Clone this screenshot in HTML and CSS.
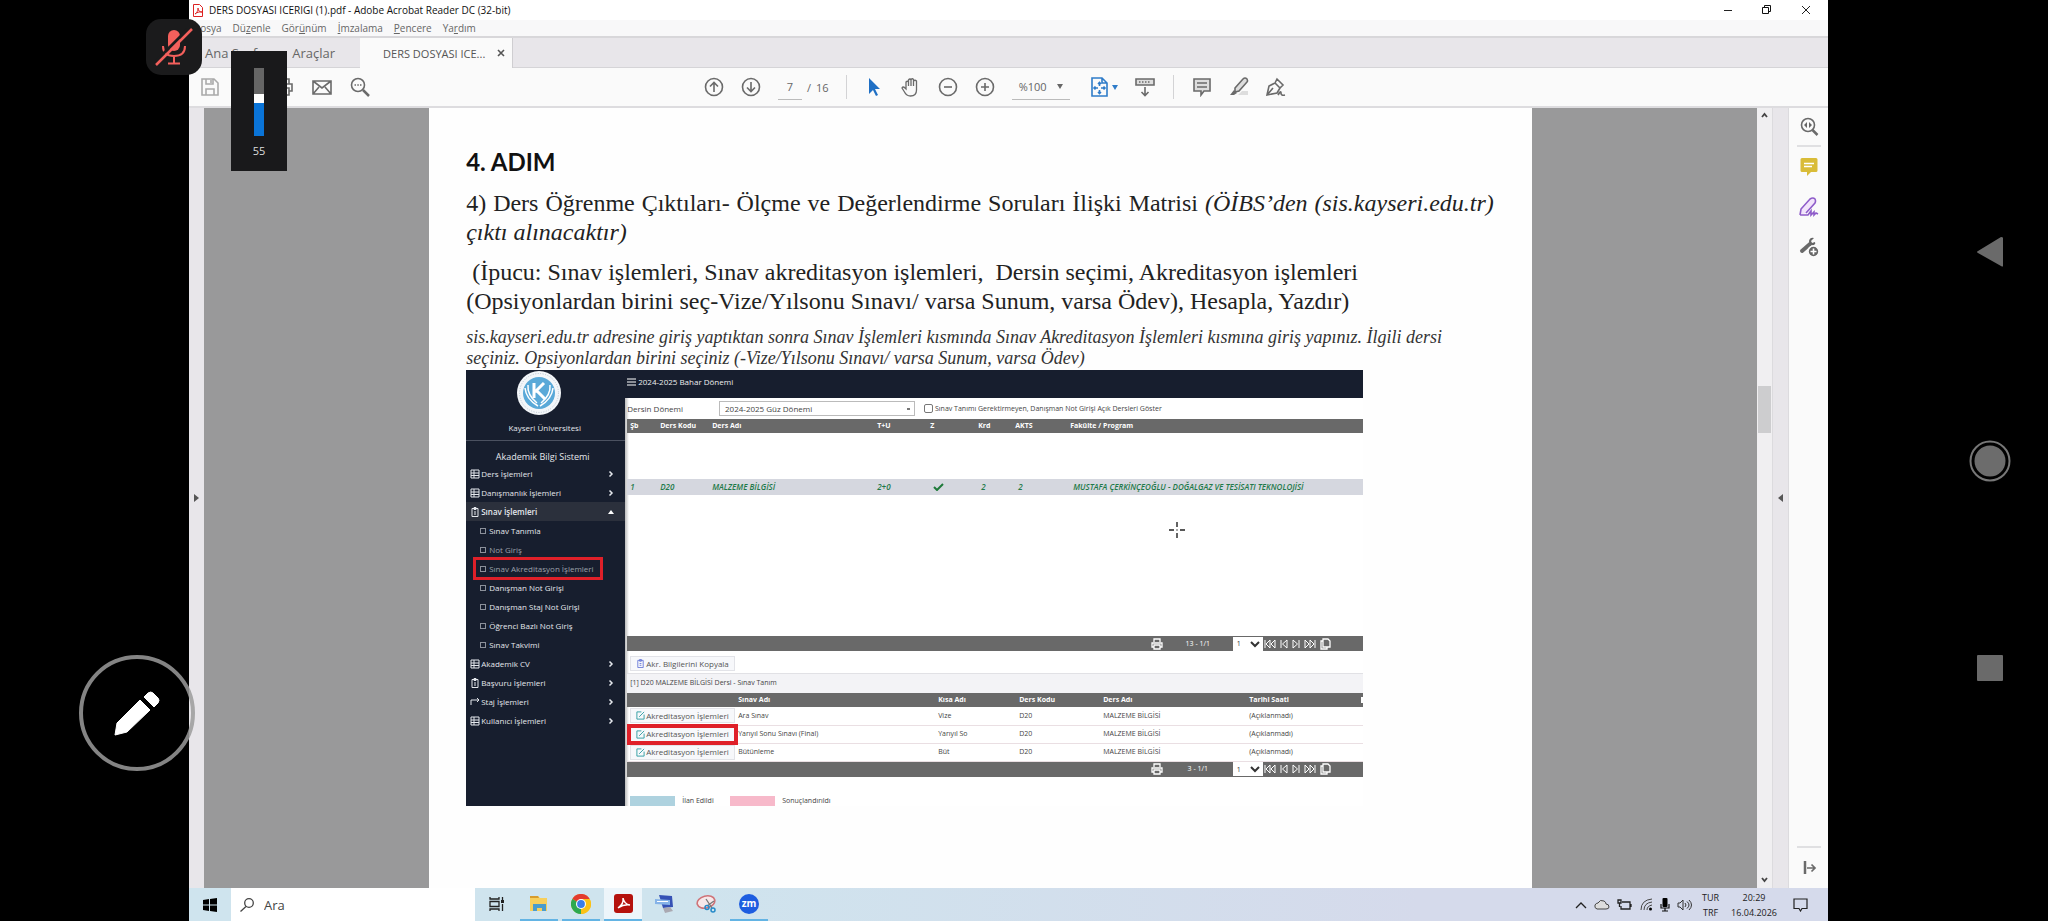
FILE: index.html
```html
<!DOCTYPE html>
<html lang="tr">
<head>
<meta charset="utf-8">
<title>DERS DOSYASI ICERIGI (1).pdf - Adobe Acrobat Reader DC (32-bit)</title>
<link rel="stylesheet" href="styles.css">
</head>
<body>
<svg class="defs" aria-hidden="true">
  <symbol id="box" viewBox="0 0 10 10"><path d="M1 1h8v8H1zM1 4h8M1 6.500h8M4 1v8" fill="none" stroke="currentColor"/></symbol>
  <symbol id="doc" viewBox="0 0 10 10"><path d="M2 1.500h6v8H2zM4 .5h2v2H4zM4 5h2M4 7h2" fill="none" stroke="currentColor"/></symbol>
  <symbol id="edit" viewBox="0 0 10 10"><path d="M6 1H1v8h8V4M3.500 6.500L9 1" fill="none" stroke="currentColor"/></symbol>
  <symbol id="printer" viewBox="0 0 12 12"><path d="M3 4V1h6v3M3 9H1V5h10v4H9M3 7h6v4H3z" fill="none" stroke="currentColor" stroke-width="1.300"/></symbol>
  <symbol id="first" viewBox="0 0 12 10"><path d="M1 1v8M6 1v8L2 5zM11 1v8L7 5z" fill="none" stroke="currentColor"/></symbol>
  <symbol id="prev" viewBox="0 0 8 10"><path d="M1 1v8M7 1v8L2.500 5z" fill="none" stroke="currentColor"/></symbol>
  <symbol id="next" viewBox="0 0 8 10"><path d="M7 1v8M1 1v8L5.500 5z" fill="none" stroke="currentColor"/></symbol>
  <symbol id="last" viewBox="0 0 12 10"><path d="M11 1v8M1 1v8L5 5zM6 1v8l4-4z" fill="none" stroke="currentColor"/></symbol>
  <symbol id="copy" viewBox="0 0 11 12"><path d="M3 1h5l2 2v6H3zM3 3H1v8h6V9" fill="none" stroke="currentColor" stroke-width="1.300"/></symbol>
  <symbol id="chev" viewBox="0 0 6 8"><path d="M1.500 1.500L4 4 1.500 6.500" fill="none" stroke="currentColor" stroke-width="1.500"/></symbol>
</svg>

<aside class="gutter gutter-left">
  <button class="pen-button" aria-label="Kalem">
    <svg viewBox="0 0 46 46" width="46" height="46"><path d="M1 45l2-12L26 10l10 10-23 22z" fill="#fff" stroke="#fff" stroke-linejoin="round"/><path d="M30 7l4-4q3-2 5 0l5 5q2 2 0 5l-4 4z" fill="#fff" stroke="#fff" stroke-linejoin="round"/></svg>
  </button>
</aside>

<main class="screen">
  <header class="titlebar">
    <svg width="10" height="13" viewBox="0 0 10 13"><path d="M.5.5h6l3 3v9h-9z" fill="#fff" stroke="#d22"/><path d="M2 10c3-2 3-5 3-6 0 3 2 4 4 4-3-.5-5 .5-7 2z" fill="none" stroke="#d22"/></svg>
    <h1 class="window-title">DERS DOSYASI ICERIGI (1).pdf - Adobe Acrobat Reader DC (32-bit)</h1>
    <div class="window-controls">
      <button aria-label="Simge durumuna küçült"><svg width="10" height="10"><path d="M1 5.500h8" stroke="#222" fill="none"/></svg></button>
      <button aria-label="Önceki boyut"><svg width="10" height="10"><path d="M.5 2.500h6v6h-6zM2.500 2.500v-2h6v6h-2" stroke="#111" fill="none"/></svg></button>
      <button aria-label="Kapat"><svg width="10" height="10"><path d="M1 1l8 8M9 1l-8 8" stroke="#222" fill="none"/></svg></button>
    </div>
  </header>
  <nav class="menubar">
    <a href="#">Dosya</a><a href="#">Dü<u>z</u>enle</a><a href="#">Gör<u>ü</u>nüm</a><a href="#"><u>İ</u>mzalama</a><a href="#"><u>P</u>encere</a><a href="#">Ya<u>r</u>dım</a>
  </nav>
  <nav class="tabs">
    <a class="tab tab-home" href="#">Ana Sayfa</a>
    <a class="tab tab-tools" href="#">Araçlar</a>
    <div class="tab tab-active"><span>DERS DOSYASI ICE...</span><button aria-label="Sekmeyi kapat"><svg width="8" height="8"><path d="M1 1l6 6M7 1L1 7" stroke="#555" stroke-width="1.600"/></svg></button></div>
  </nav>
  <div class="toolbar">
    <div class="tools tools-file">
      <button aria-label="Kaydet" class="faded"><svg width="20" height="20" viewBox="0 0 20 20"><path d="M2 2h12l4 4v12H2zM6 2v5h7V2M6 18v-6h8v6M11 3v3"/></svg></button>
      <button aria-label="Yazdır"><svg width="20" height="20" viewBox="0 0 20 20"><path d="M5 7V2h10v5M5 14H2V7h16v7h-3M5 11h10v7H5z"/></svg></button>
      <button aria-label="E-posta"><svg width="20" height="20" viewBox="0 0 20 20"><path d="M1 4h18v13H1zM1 4l9 7 9-7M1 17l6-7M19 17l-6-7"/></svg></button>
      <button aria-label="Bul"><svg width="20" height="20" viewBox="0 0 20 20"><circle cx="8" cy="8" r="6.500"/><path d="M13 13l6 6" stroke-width="2.500"/><path d="M4.500 8h1.500M7.300 8h1.500M10 8h1.500" /></svg></button>
    </div>
    <div class="tools tools-main">
      <button aria-label="Önceki sayfa"><svg width="20" height="20" viewBox="0 0 20 20"><circle cx="10" cy="10" r="8.500"/><path d="M10 15V5.500M6 9.500l4-4 4 4"/></svg></button>
      <button aria-label="Sonraki sayfa"><svg width="20" height="20" viewBox="0 0 20 20"><circle cx="10" cy="10" r="8.500"/><path d="M10 5v9.500M6 10.500l4 4 4-4"/></svg></button>
      <label class="page-field"><input value="7" aria-label="Sayfa"><span>/</span><span>16</span></label>
      <i class="sep"></i>
      <button aria-label="Seç"><svg width="20" height="20" viewBox="0 0 20 20"><path d="M5 1v16l4-4 3 6 2-1-3-6h5z" fill="#1f6fc4" stroke="none"/></svg></button>
      <button aria-label="El"><svg width="20" height="20" viewBox="0 0 20 20"><path d="M5 12V5q1.500-1.500 2.500 0v4V3Q9 1 10 3v6V2.500q1.500-1.500 2.500 0V9V4q1.500-1.500 3 0v9q0 6-6 6-4 0-6-4l-2.500-4q1-2 3 0z" stroke-width="1.300"/></svg></button>
      <button aria-label="Uzaklaştır"><svg width="20" height="20" viewBox="0 0 20 20"><circle cx="10" cy="10" r="8.500"/><path d="M6 10h8"/></svg></button>
      <button aria-label="Yakınlaştır"><svg width="20" height="20" viewBox="0 0 20 20"><circle cx="10" cy="10" r="8.500"/><path d="M6 10h8M10 6v8"/></svg></button>
      <button class="zoom-field"><span>%100</span><i class="caret"></i></button>
      <button class="fit blue" aria-label="Sayfayı sığdır"><svg width="17" height="20" viewBox="0 0 17 20"><path d="M1 1h10l5 5v13H1zM11 1v5h5M8.500 5v4M8.500 13v4M3 11h4M10 11h4M7 7l1.500-1.500L10 7M7 15l1.500 1.500L10 15M4.500 9.500L3 11l1.500 1.500M12.500 9.500L14 11l-1.500 1.500"/></svg><i class="caret"></i></button>
      <button aria-label="Kaydırma"><svg width="20" height="20" viewBox="0 0 20 20"><path d="M1 2h18v6H1z" fill="#ddd"/><path d="M4 5h12" stroke-dasharray="1.500 1.500"/><path d="M10 10v8.500M6.500 15l3.500 3.500 3.500-3.500"/></svg></button>
      <i class="sep sep-wide"></i>
      <button aria-label="Yorum"><svg width="20" height="20" viewBox="0 0 20 20"><path d="M2 2h16v12h-6l-3 4v-4H2z" fill="#ddd"/><path d="M5 6h10M5 10h10"/></svg></button>
      <button aria-label="Vurgula"><svg width="20" height="20" viewBox="0 0 20 20"><path d="M9 18h10v-4h-6z" fill="#ddd" stroke="none"/><path d="M6 11L14 2q2-2 4 0 1 2 0 3l-8 9-4 1z" fill="#ddd"/><path d="M1 18l4-5 3 3-3 2z" fill="#6a6a6a" stroke="none"/></svg></button>
      <button aria-label="İmzala"><svg width="20" height="20" viewBox="0 0 20 20"><path d="M1 18l2-9 6-3 5 5-3 5zM1 18l6-7M9 6l2-4 6 6-3 3M12 18q3-5 3-2t4 2"/></svg></button>
    </div>
  </div>

  <section class="workspace">
    <button class="rail" aria-label="Gezinti bölmesi"><svg width="5" height="8"><path d="M0 0l5 4-5 4z" fill="#555"/></svg></button>
    <div class="canvas">
      <article class="page">
        <h2>4. ADIM</h2>
        <p class="lead justified">4) Ders Öğrenme Çıktıları- Ölçme ve Değerlendirme Soruları İlişki Matrisi <em>(ÖİBS’den (sis.kayseri.edu.tr) çıktı alınacaktır)</em></p>
        <p class="lead">&nbsp;(İpucu: Sınav işlemleri, Sınav akreditasyon işlemleri,&nbsp; Dersin seçimi, Akreditasyon işlemleri<br>(Opsiyonlardan birini seç-Vize/Yılsonu Sınavı/ varsa Sunum, varsa Ödev), Hesapla, Yazdır)</p>
        <p class="note">sis.kayseri.edu.tr adresine giriş yaptıktan sonra Sınav İşlemleri kısmında Sınav Akreditasyon İşlemleri kısmına giriş yapınız. İlgili dersi<br>seçiniz. Opsiyonlardan birini seçiniz (-Vize/Yılsonu Sınavı/ varsa Sunum, varsa Ödev)</p>

        <div class="portal">
          <nav class="side">
            <svg class="crest" width="44" height="44" viewBox="0 0 44 44"><circle cx="22" cy="22" r="22" fill="#f3f6f9"/><circle cx="22" cy="22" r="19.500" fill="none" stroke="#b9c6d2" stroke-dasharray="1 1.500"/><circle cx="22" cy="22" r="16" fill="#5aa9d8"/><path d="M17 12v15M18 21l9-9M19 19l9 9" stroke="#fff" stroke-width="3" fill="none"/><path d="M8 17q1 11 13 18M36 17q-1 11-13 18M11 14q-1 10 9 18M33 14q1 10-9 18" fill="none" stroke="#fff" stroke-width="1.500"/></svg>
            <div class="uni">Kayseri Üniversitesi</div>
            <div class="system">Akademik Bilgi Sistemi</div>
            <a href="#"><svg><use href="#box"/></svg>Ders İşlemleri<svg class="chev"><use href="#chev"/></svg></a>
            <a href="#"><svg><use href="#box"/></svg>Danışmanlık İşlemleri<svg class="chev"><use href="#chev"/></svg></a>
            <a href="#" class="open"><svg><use href="#doc"/></svg>Sınav İşlemleri<svg class="chev" viewBox="0 0 6 8"><path d="M0 6l3-4 3 4z" fill="#fff"/></svg></a>
            <a href="#" class="sub"><i></i>Sınav Tanımla</a>
            <a href="#" class="sub dim"><i></i>Not Giriş</a>
            <a href="#" class="sub dim marked"><i></i>Sınav Akreditasyon İşlemleri</a>
            <a href="#" class="sub"><i></i>Danışman Not Girişi</a>
            <a href="#" class="sub"><i></i>Danışman Staj Not Girişi</a>
            <a href="#" class="sub"><i></i>Öğrenci Bazlı Not Giriş</a>
            <a href="#" class="sub"><i></i>Sınav Takvimi</a>
            <a href="#"><svg><use href="#box"/></svg>Akademik CV<svg class="chev"><use href="#chev"/></svg></a>
            <a href="#"><svg><use href="#doc"/></svg>Başvuru İşlemleri<svg class="chev"><use href="#chev"/></svg></a>
            <a href="#"><svg viewBox="0 0 10 10"><path d="M1 8V3h8M7 1l2 2-2 2" fill="none" stroke="currentColor"/></svg>Staj İşlemleri<svg class="chev"><use href="#chev"/></svg></a>
            <a href="#"><svg><use href="#box"/></svg>Kullanıcı İşlemleri<svg class="chev"><use href="#chev"/></svg></a>
          </nav>
          <div class="portal-main">
            <div class="portal-head"><svg width="9" height="8"><path d="M0 1h9M0 4h9M0 7h9" stroke="#fff"/></svg>2024-2025 Bahar Dönemi</div>
            <div class="filter">
              <label for="term">Dersin Dönemi</label>
              <select id="term"><option>2024-2025 Güz Dönemi</option></select>
              <label class="check"><input type="checkbox">Sınav Tanımı Gerektirmeyen, Danışman Not Girişi Açık Dersleri Göster</label>
            </div>
            <table class="courses">
              <colgroup><col class="c1"><col class="c2"><col class="c3"><col class="c4"><col class="c5"><col class="c6"><col class="c7"><col></colgroup>
              <thead><tr><th>Şb</th><th>Ders Kodu</th><th>Ders Adı</th><th>T+U</th><th>Z</th><th>Krd</th><th>AKTS</th><th>Fakülte / Program</th></tr></thead>
              <tbody>
                <tr class="blank"><td colspan="8"></td></tr>
                <tr class="course"><td>1</td><td>D20</td><td>MALZEME BİLGİSİ</td><td>2+0</td><td><svg width="11" height="8"><path d="M1 4l3 3 6-6" fill="none" stroke="#1f7a3a" stroke-width="2"/></svg></td><td>2</td><td>2</td><td>MUSTAFA ÇERKİNÇEOĞLU - DOĞALGAZ VE TESİSATI TEKNOLOJİSİ</td></tr>
              </tbody>
            </table>
            <div class="pager first-pager">
              <svg width="12" height="12"><use href="#printer"/></svg><span>13 - 1/1</span>
              <select aria-label="Sayfa"><option>1</option></select>
              <svg width="12" height="10"><use href="#first"/></svg><svg width="8" height="10"><use href="#prev"/></svg><svg width="8" height="10"><use href="#next"/></svg><svg width="12" height="10"><use href="#last"/></svg><svg width="11" height="12"><use href="#copy"/></svg>
            </div>
            <div class="copy-row"><button class="mini"><svg class="violet"><use href="#doc"/></svg>Akr. Bilgilerini Kopyala</button></div>
            <div class="caption">[1] D20 MALZEME BİLGİSİ Dersi - Sınav Tanım</div>
            <table class="exams">
              <colgroup><col class="e1"><col class="e2"><col class="e3"><col class="e4"><col class="e5"><col></colgroup>
              <thead><tr><th></th><th>Sınav Adı</th><th>Kısa Adı</th><th>Ders Kodu</th><th>Ders Adı</th><th>Tarihi Saati</th></tr></thead>
              <tbody>
                <tr><td><button class="mini"><svg><use href="#edit"/></svg>Akreditasyon İşlemleri</button></td><td>Ara Sınav</td><td>Vize</td><td>D20</td><td>MALZEME BİLGİSİ</td><td>(Açıklanmadı)</td></tr>
                <tr><td><button class="mini marked"><svg><use href="#edit"/></svg>Akreditasyon İşlemleri</button></td><td>Yarıyıl Sonu Sınavı (Final)</td><td>Yarıyıl So</td><td>D20</td><td>MALZEME BİLGİSİ</td><td>(Açıklanmadı)</td></tr>
                <tr><td><button class="mini"><svg><use href="#edit"/></svg>Akreditasyon İşlemleri</button></td><td>Bütünleme</td><td>Büt</td><td>D20</td><td>MALZEME BİLGİSİ</td><td>(Açıklanmadı)</td></tr>
              </tbody>
            </table>
            <div class="pager">
              <svg width="12" height="12"><use href="#printer"/></svg><span>3 - 1/1</span>
              <select aria-label="Sayfa"><option>1</option></select>
              <svg width="12" height="10"><use href="#first"/></svg><svg width="8" height="10"><use href="#prev"/></svg><svg width="8" height="10"><use href="#next"/></svg><svg width="12" height="10"><use href="#last"/></svg><svg width="11" height="12"><use href="#copy"/></svg>
            </div>
            <div class="legend"><i class="announced"></i><span>İlan Edildi</span><i class="finished"></i><span>Sonuçlandırıldı</span></div>
          </div>
          <svg class="crosshair" width="16" height="16"><path d="M0 8h5M11 8h5M8 0v5M8 11v5M7.500 8h1" stroke="#222" stroke-width="1.400"/></svg>
        </div>
      </article>
    </div>
    <div class="scrollbar">
      <svg width="7" height="6"><path d="M1 5l2.500-3L6 5" fill="none" stroke="#444" stroke-width="1.800"/></svg>
      <i class="thumb"></i>
      <svg width="7" height="6"><path d="M1 1l2.500 3L6 1" fill="none" stroke="#444" stroke-width="1.800"/></svg>
    </div>
    <button class="rail rail-right" aria-label="Araç bölmesi"><svg width="5" height="8"><path d="M5 0L0 4l5 4z" fill="#555"/></svg></button>
    <aside class="toolpane">
      <button aria-label="Ara"><svg width="20" height="20" viewBox="0 0 20 20"><circle cx="9" cy="8" r="6.500"/><path d="M13.500 13l5 5" stroke-width="2.500"/><path d="M8 5v6L5 8zM10 5v6l3-3z" fill="#666" stroke="none"/></svg></button>
      <i class="rule"></i>
      <button aria-label="Yorum"><svg width="20" height="20" viewBox="0 0 20 20"><path d="M2 1h15q1.500 0 1.500 1.500v11Q18.500 15 17 15h-5l-4 4v-4H3q-1.500 0-1.500-1.500v-11Q1.500 1 3 1z" fill="#d9bc38" stroke="none"/><path d="M5 6.500h10M5 9.500h8" stroke="#fff"/></svg></button>
      <button aria-label="Doldur ve imzala"><svg width="20" height="20" viewBox="0 0 20 20"><path d="M1 18l1-6L11 2q3-2 5 0 1 2 0 4L7 16M1 18h8l3-4v4l3-3v3l2-2 2 1" fill="#f2e4fb" stroke="#8e5cc9"/></svg></button>
      <button aria-label="Diğer araçlar"><svg width="20" height="20" viewBox="0 0 20 20"><path d="M3 14l8-7" stroke-width="4" stroke-linecap="round"/><path d="M15 1q-4-1-5 3 0 5 5 4 2-1 1-3l-3 1-1-2z" fill="#666" stroke="none"/><circle cx="14.500" cy="14.500" r="5.500" fill="#666" stroke="#fafafa"/><path d="M14.500 11.500v6M11.500 14.500h6" stroke="#fff"/></svg></button>
      <i class="rule rule-bottom"></i>
      <button aria-label="Bölmeyi daralt"><svg width="20" height="20" viewBox="0 0 20 20"><path d="M6 3v13" stroke-width="2.500"/><path d="M8 10h8M12.500 6.500L16 10l-3.500 3.500" stroke-width="1.700"/></svg></button>
    </aside>
  </section>

  <footer class="taskbar">
    <button class="start" aria-label="Başlat"><svg width="14" height="14"><path d="M0 2l6-1v5.500H0zM7 1l7-1v6.500H7zM0 7.500h6V13l-6-1zM7 7.500h7V14l-7-1z"/></svg></button>
    <label class="search"><svg width="14" height="14"><circle cx="9" cy="5" r="4.300" fill="none" stroke="#444" stroke-width="1.300"/><path d="M6 8.500L.5 13.500" stroke="#444" stroke-width="1.300"/></svg><input placeholder="Ara" aria-label="Ara"></label>
    <div class="apps">
      <button aria-label="Görev görünümü"><svg width="16" height="14"><path d="M1 0v2h9V0M1 14v-2h9v2M1 4.500h9v5H1zM13.500 0v3M13.500 7v7" fill="none" stroke="#222" stroke-width="1.300"/><path d="M12 3h3v3h-3z" fill="#222"/></svg></button>
      <button class="running" aria-label="Dosya Gezgini"><svg width="20" height="18"><path d="M1 1h8l2 2h7v13H1z" fill="#f7cf5c"/><path d="M1 1h8l1 2H1z" fill="#d79c2d"/><path d="M4 9h13v7h-4v-3H8v3H4z" fill="#4a9ccd"/></svg></button>
      <button class="running" aria-label="Chrome"><svg width="20" height="20" viewBox="0 0 20 20"><circle cx="10" cy="10" r="10" fill="#fbc116"/><path d="M10 10L1.300 5A10 10 0 0118.700 5z" fill="#e33b2e"/><path d="M10 10L1.300 5A10 10 0 0010 20z" fill="#2da94f"/><path d="M10 5h8.700A10 10 0 0110 20l4-8z" fill="#fbc116"/><circle cx="10" cy="10" r="5" fill="#fff"/><circle cx="10" cy="10" r="3.900" fill="#3b7de8"/></svg></button>
      <button class="running current" aria-label="Acrobat Reader"><svg width="19" height="19"><rect width="19" height="19" rx="3" fill="#b5120d"/><path d="M4 14q6-4 5-10 1 6 7 7-6-1-12 3z" fill="none" stroke="#fff" stroke-width="1.500"/></svg></button>
      <button aria-label="Uzak bağlantı"><svg width="20" height="20"><path d="M4 1l13 1 1 11-10 1z" fill="#3652b5"/><path d="M0 5l15 1v5L0 10z" fill="#86b3e8"/><path d="M2 7.500h11" stroke="#fff"/><path d="M8 14l7-1 3 4-8 2z" fill="#aaa9b2"/></svg></button>
      <button aria-label="Ekran Alıntısı"><svg width="22" height="20"><ellipse cx="10" cy="8" rx="9" ry="6" fill="#f7e8ea" stroke="#cf7378" stroke-width="1.600" transform="rotate(-15 10 8)"/><path d="M10 5l6 9M18 7l-7 5" stroke="#777" stroke-width="1.300"/><circle cx="17" cy="16" r="2" fill="none" stroke="#268ac9" stroke-width="1.500"/><circle cx="11" cy="13.500" r="2" fill="none" stroke="#268ac9" stroke-width="1.500"/></svg></button>
      <button class="running" aria-label="Zoom"><span class="zoom-logo">zm</span></button>
    </div>
    <div class="tray">
      <svg width="12" height="8"><path d="M1 7l5-5 5 5" fill="none" stroke="#222" stroke-width="1.300"/></svg>
      <svg width="16" height="12"><path d="M3 10q-3-1-2-4 1-2 3-2 2-4 6-2 2 1 2 3 3 0 3 3 0 2-3 2z" fill="#ddd" stroke="#444"/></svg>
      <svg width="16" height="12"><path d="M5 3h8v7H4V7M14 5v3M1 1h3v3H1zM2.500 4v4" fill="none" stroke="#222" stroke-width="1.300"/></svg>
      <svg width="13" height="13"><path d="M1 12Q1 2 12 1M4 12q0-7 8-8M7 12q0-4 5-5" fill="none" stroke="#444"/><circle cx="10.500" cy="11" r="1.500"/></svg>
      <svg width="10" height="14"><rect x="2.500" width="5" height="9" rx="1"/><path d="M1 6v4h8V6M5 10v3M2 13h6" fill="none" stroke="#111" stroke-width="1.200"/></svg>
      <svg width="16" height="12"><path d="M1 4h2l3-3v10L3 8H1zM8 4q2 2 0 4M10 2.500q4 3.500 0 7M12 1q5 5 0 10" fill="none" stroke="#333"/></svg>
      <div class="tray-text lang"><span>TUR</span><span>TRF</span></div>
      <div class="tray-text clock"><span>20:29</span><span>16.04.2026</span></div>
      <svg width="15" height="14"><path d="M1 1h13v9.500H9L7.500 13 6 10.500H1z" fill="none" stroke="#222" stroke-width="1.200"/></svg>
    </div>
  </footer>

  <div class="mic-badge"><svg width="38" height="38" viewBox="0 0 38 38" fill="none" stroke="#f4605c" stroke-width="2"><rect x="13" y="2" width="12" height="21" rx="6" fill="#f4605c" stroke="none"/><path d="M8 18q0 10 11 10t11-10M19 28v7M13 35.500h12"/><path d="M0 34L34 0" stroke="#1b1b1c" stroke-width="3"/><path d="M1 37L37 1" stroke-width="2.500"/></svg></div>
  <div class="volume"><div class="track"><i></i></div><span>55</span></div>
</main>

<nav class="gutter gutter-right">
  <button class="nav-back" aria-label="Geri"><svg width="28" height="32"><path d="M27 2v28q0 1-2 0L2 17q-2-1 0-2L25 1q2 0 2 1z" fill="#6a6a6a"/></svg></button>
  <button class="nav-home" aria-label="Ana ekran"><svg width="42" height="42"><circle cx="21" cy="21" r="19.500" fill="none" stroke="#777" stroke-width="2"/><circle cx="21" cy="21" r="15.500" fill="#6c6c6c"/></svg></button>
  <button class="nav-recent" aria-label="Son uygulamalar"><svg width="28" height="28"><rect x="1" y="1" width="26" height="26" rx="1" fill="#6a6a6a"/></svg></button>
</nav>
</body>
</html>
```
FILE: styles.css
```css
* { box-sizing: border-box; }
body { margin: 0; height: 100vh; display: flex; background: #000; font-family: "Open Sans", "Noto Sans", sans-serif; overflow: hidden; }
button { border: 0; padding: 0; background: none; font: inherit; color: inherit; display: flex; align-items: center; justify-content: center; }
a { color: inherit; text-decoration: none; }
input, select { font: inherit; color: inherit; }
svg { display: block; flex: none; }
.defs { position: absolute; width: 0; height: 0; }

.gutter { flex: none; background: #000; position: relative; }
.gutter-left { width: 189px; }
.gutter-right { width: 220px; display: flex; flex-direction: column; align-items: center; padding: 236px 0 0 104px; }
.nav-home { margin-top: 172px; }
.nav-recent { margin-top: 172px; }
.pen-button { position: absolute; z-index: 2; left: 79px; bottom: 150px; width: 116px; height: 116px; border-radius: 50%; border: 4px solid rgba(155, 155, 155, .85); }

.screen { flex: 1; min-width: 0; display: flex; flex-direction: column; position: relative; background: #fff; }
.titlebar { height: 20px; flex: none; display: flex; align-items: center; gap: 6px; padding-left: 4px; background: #fff; }
.window-title { margin: 0; font: 10px/20px "Open Sans", sans-serif; color: #111; white-space: nowrap; }
.window-controls { margin-left: auto; display: flex; gap: 29px; padding-right: 17px; }
.menubar { height: 16px; flex: none; display: flex; gap: 11px; padding-left: 4px; background: #f8f8f9; font-size: 10px; line-height: 16px; color: #666; }
.tabs { height: 32px; flex: none; display: flex; background: #e8e6ea; border-top: 2px solid #d8d7da; border-bottom: 1px solid #d5d4d7; font-size: 13px; color: #666; }
.tab { display: flex; align-items: center; }
.tab-home { padding: 0 28px 0 16px; }
.tab-tools { padding-right: 25px; }
.tab-active { width: 153px; margin-bottom: -1px; padding-left: 23px; justify-content: space-between; padding-right: 7px; background: #fafafa; border-right: 1px solid #cfced1; font-size: 11px; color: #555; }
.toolbar { height: 40px; flex: none; display: flex; align-items: center; background: #fafafa; border-bottom: 2px solid #dddcdf; color: #666; font-size: 11px; }
.toolbar svg, .toolpane svg { fill: none; stroke: #6a6a6a; stroke-width: 1.6; }
.tools { display: flex; align-items: center; }
.tools-file { padding-left: 11px; gap: 18px; width: 515px; }
.tools-file .faded { opacity: .55; margin-right: 36px; }
.tools-main { gap: 17px; }
.blue svg { stroke: #2f7cc9; }
.page-field { display: flex; align-items: center; gap: 5px; }
.page-field input { width: 24px; height: 26px; border: 0; border-bottom: 1px solid #bbb; padding: 0; text-align: center; background: none; }
.sep { width: 1px; height: 24px; background: #d3d3d5; }
.sep-wide { margin: 0 1px; }
.caret { width: 0; height: 0; border: 3px solid transparent; border-top: 5px solid #666; border-bottom: 0; }
.zoom-field { width: 58px; height: 26px; border-bottom: 1px solid #bbb; justify-content: space-between; padding: 0 7px; }
.fit { gap: 4px; margin-left: 4px; }
.blue .caret { border-top-color: #2f7cc9; }

.workspace { flex: 1; min-height: 0; display: flex; }
.rail { width: 15px; flex: none; background: #e8e6ea; }
.rail-right { width: 17px; border: solid #dcdbde; border-width: 0 1px; }
.canvas { flex: 1; min-width: 0; overflow: hidden; background: #99999a; display: flex; justify-content: center; }
.page { width: 71%; background: #fefefe; padding: 37px 38px 0 37px; color: #222; font-family: "Liberation Serif", serif; }
.page h2 { margin: 0; font: bold 24px/34px Lato, sans-serif; color: #111; }
.page p { margin: 0; white-space: nowrap; }
.page .lead { font-size: 24px; line-height: 29px; margin-top: 11px; }
.page .justified { white-space: normal; text-align: justify; margin-top: 10px; }
.page .note { font-size: 18px; line-height: 21px; font-style: italic; margin-top: 11px; color: #333; }

.portal { height: 436px; margin: 1px 131px 0 0; position: relative; display: grid; grid-template-columns: 159px 1fr; font: 8px/14px "Open Sans", sans-serif; color: #444; }
.side { background: #171e2e; color: #e4e7ec; padding-top: 1px; }
.crest { margin-left: 51px; }
.uni { text-align: center; line-height: 25px; padding-right: 2px; border-bottom: 1px solid #4b5160; }
.system { text-align: center; font-size: 9px; line-height: 15px; padding: 8px 6px 0 0; }
.side a { display: flex; align-items: center; gap: 1px; height: 19px; padding: 0 11px 0 4px; white-space: nowrap; }
.side a svg { width: 10px; height: 10px; }
.side a .chev { width: 6px; height: 8px; margin-left: auto; }
.side .open { background: #2b303c; font-weight: 600; }
.side .sub { padding-left: 14px; gap: 3px; }
.side .sub i { width: 6px; height: 6px; border: 1px solid #8b909a; }
.side .dim { color: #9ba0aa; }
.side .marked { outline: 3px solid #df2029; outline-offset: -1px; margin: 0 24px 0 9px; padding: 0 0 0 5px; height: 19px; }
.portal-main { background: linear-gradient(90deg, #bbb, #fff 4px); min-width: 0; padding-left: 2px; display: flex; flex-direction: column; }
.portal-head { margin-left: -2px; height: 28px; display: flex; gap: 2px; align-items: center; padding: 0 0 4px 2px; background: #171e2e; color: #eee; }
.filter { height: 21px; display: flex; align-items: center; }
.filter select { appearance: none; width: 196px; height: 15px; margin-left: 36px; padding: 0 5px; border: 1px solid #bbb; background: linear-gradient(#777, #777) right 4px center / 3px 2px no-repeat #fff; }
.check { display: flex; align-items: center; gap: 2px; margin-left: 9px; font-size: 7px; }
.check input { appearance: none; width: 9px; height: 9px; margin: 0; border: 1px solid #777; border-radius: 2px; }
table { width: 100%; border-collapse: collapse; table-layout: fixed; }
th { height: 14px; padding: 0; background: #696969; color: #fff; text-align: left; white-space: nowrap; font-size: 7px; line-height: 14px; }
td { padding: 0; white-space: nowrap; }
.c1 { width: 33px; } .c2 { width: 52px; } .c3 { width: 165px; } .c4 { width: 53px; } .c5 { width: 48px; } .c6 { width: 37px; } .c7 { width: 55px; }
.courses th:first-child, .courses td:first-child { padding-left: 3px; }
.blank td { height: 46px; }
.course td { height: 16px; background: #d5d7df; color: #1f7a4a; font-weight: 600; font-style: italic; font-size: 8px; }
.course td + td + td + td + td { padding-left: 3px; }
.pager { height: 15px; display: flex; align-items: center; background: #696969; color: #fff; font-size: 7px; padding-right: 32px; justify-content: flex-end; gap: 4px; }
.pager span { width: 62px; text-align: center; }
.pager select { width: 30px; height: 14px; border: 0; padding: 0; background: #fff; color: #333; margin-right: -3px; }
.first-pager { margin-top: 141px; }
.copy-row { height: 22px; padding: 5px 0 0 3px; }
.mini { height: 15px; padding: 0 5px; gap: 1px; border: 1px solid #e2e3e8; background: #f7f8fb; white-space: nowrap; color: #555; }
.mini svg { width: 9px; height: 9px; color: #2a9aa0; }
.mini .violet { color: #6878d8; }
.caption { height: 20px; padding-left: 3px; line-height: 18px; font-size: 7px; background: #f3f3f6; border-top: 1px solid #e1e1e5; }
.e1 { width: 111px; } .e2 { width: 200px; } .e3 { width: 81px; } .e4 { width: 84px; } .e5 { width: 146px; }
.exams td { height: 18px; font-size: 7px; border-bottom: 1px solid #eadfe3; }
.exams .mini { margin-left: 3px; font-size: 8px; }
.exams .marked { outline: 4px solid #df2029; outline-offset: -1px; }
.exams th:last-child { background: linear-gradient(#fff, #fff) right center / 2px 6px no-repeat #696969; }
.legend { margin-top: auto; height: 10px; padding-left: 3px; display: flex; line-height: 10px; font-size: 7px; }
.legend i { width: 45px; }
.legend span { width: 55px; padding-left: 7px; white-space: nowrap; }
.announced { background: #aed2df; }
.finished { background: #f7b9ca; }
.crosshair { position: absolute; left: 703px; top: 152px; }

.scrollbar { width: 15px; flex: none; background: #f0eff1; display: flex; flex-direction: column; align-items: center; padding: 4px 0 5px; }
.thumb { width: 13px; height: 47px; margin: 268px 0 auto; background: #cdcdcf; }
.toolpane { width: 39px; flex: none; background: #fafafa; display: flex; flex-direction: column; align-items: center; gap: 20px; padding: 9px 0 10px; }
.rule { width: 24px; height: 2px; margin: -12px 0 -10px; background: #e0e0e2; }
.rule-bottom { margin-top: auto; }

.taskbar { height: 33px; flex: none; display: flex; background: linear-gradient(90deg, #cfe4ee 30%, #d5daeb 75%); color: #222; }
.start { width: 42px; }
.search { width: 244px; display: flex; align-items: center; gap: 10px; padding-left: 9px; background: #fff; }
.search input { width: 160px; border: 0; padding: 0; font-size: 13px; outline: 0; }
.search input::placeholder { color: #444; opacity: 1; }
.apps { display: flex; gap: 4px; padding-left: 3px; }
.apps button { width: 38px; border-bottom: 2px solid transparent; }
.apps .running { border-bottom-color: #63b4e4; }
.apps .current { background: #edf5fa; }
.zoom-logo { width: 20px; height: 20px; border-radius: 50%; background: #1d5de0; color: #fff; font: bold 10px/19px "Open Sans", sans-serif; text-align: center; }
.tray { margin-left: auto; display: flex; align-items: center; gap: 7px; padding-right: 20px; }
.tray-text { display: flex; flex-direction: column; align-items: center; font-size: 9px; line-height: 15px; }
.clock { margin: 0 9px 0 5px; }
.lang { margin-left: 2px; }

.mic-badge { position: absolute; left: -43px; top: 19px; width: 56px; height: 56px; border-radius: 15px; background: #1b1b1c; display: grid; place-items: center; }
.volume { position: absolute; left: 42px; top: 51px; width: 56px; height: 120px; padding-top: 17px; background: #19191b; color: #ddd; font-size: 11px; display: flex; flex-direction: column; align-items: center; gap: 7px; }
.track { width: 10px; height: 68px; padding-top: 26px; background: #666; display: flex; }
.track i { flex: 1; background: #0a74d8; border-top: 9px solid #fff; }
```
